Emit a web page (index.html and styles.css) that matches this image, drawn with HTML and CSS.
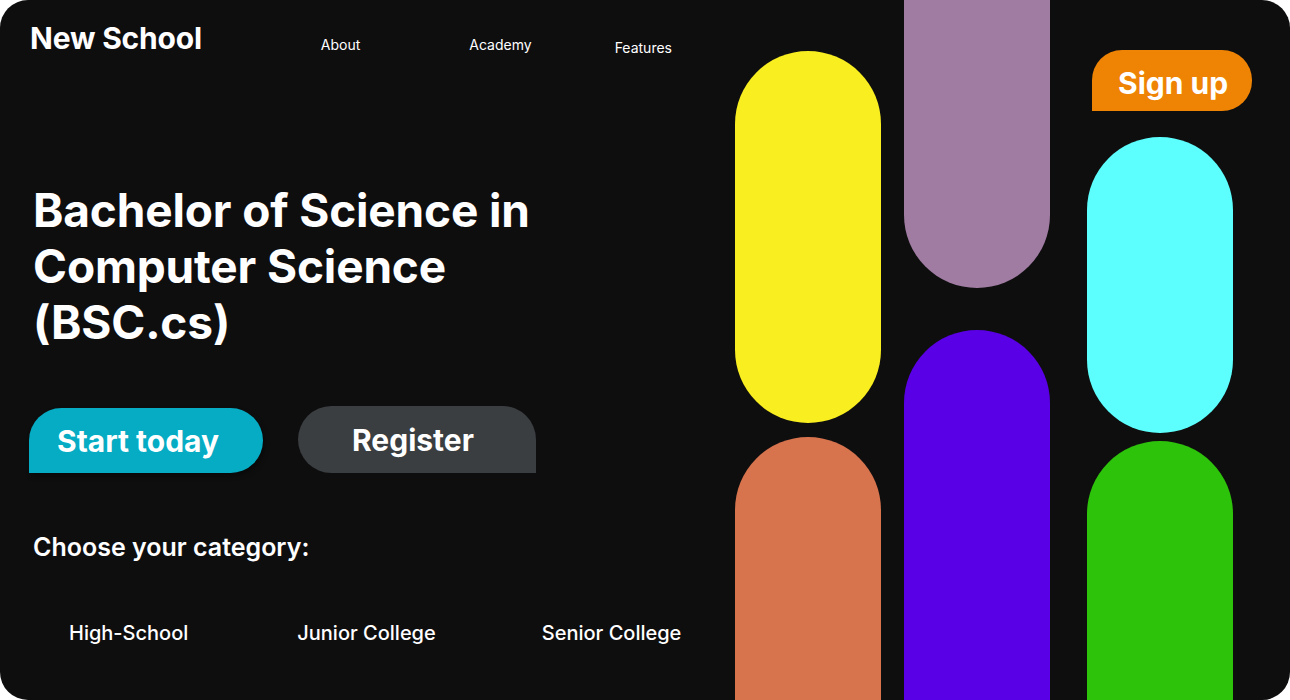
FILE: index.html
```html
<!DOCTYPE html>
<html lang="en">
<head>
<meta charset="utf-8">
<title>New School</title>
<link rel="stylesheet" href="styles.css">
</head>
<body>
<div class="page">
  <main class="left">
    <header class="header">
      <div class="logo">New School</div>
      <nav class="nav">
        <a class="nav-link about">About</a>
        <a class="nav-link academy">Academy</a>
        <a class="nav-link features">Features</a>
      </nav>
    </header>
    <h1 class="title">Bachelor of Science in<br>Computer Science<br>(BSC.cs)</h1>
    <div class="actions">
      <a class="btn btn-start">Start today</a>
      <a class="btn btn-register">Register</a>
    </div>
    <h2 class="choose">Choose your category:</h2>
    <div class="categories">
      <a class="cat cat-high">High-School</a>
      <a class="cat cat-junior">Junior College</a>
      <a class="cat cat-senior">Senior College</a>
    </div>
  </main>
  <aside class="art">
    <div class="col col-1">
      <div class="shape yellow"></div>
      <div class="shape orange"></div>
    </div>
    <div class="col col-2">
      <div class="shape mauve"></div>
      <div class="shape purple"></div>
    </div>
    <div class="col col-3">
      <a class="btn btn-signup">Sign up</a>
      <div class="shape cyan"></div>
      <div class="shape green"></div>
    </div>
  </aside>
</div>
</body>
</html>
```
FILE: styles.css
```css
html, body {
  margin: 0;
  padding: 0;
  background: #ffffff;
}
body {
  font-family: Inter, "Noto Sans", sans-serif;
  color: #ffffff;
}
.page {
  width: 1290px;
  height: 700px;
  background: #0f0e0f;
  border-radius: 28px;
  overflow: hidden;
  display: flex;
}
.left {
  width: 735px;
  flex: none;
  display: flex;
  flex-direction: column;
}
.header {
  display: flex;
  align-items: flex-start;
  padding: 20px 0 0 30px;
}
.logo {
  font-size: 30px;
  font-weight: 700;
  line-height: 36px;
  letter-spacing: -0.2px;
}
.nav {
  display: flex;
  align-items: flex-start;
}
.nav-link {
  font-size: 14px;
  font-weight: 400;
  line-height: 17px;
}
.about { margin: 16px 0 0 119px; }
.academy { margin: 16px 0 0 109px; }
.features { margin: 19px 0 0 83px; }
.title {
  margin: 126px 0 0 33px;
  font-size: 46px;
  font-weight: 700;
  line-height: 56px;
  letter-spacing: -0.15px;
}
.actions {
  display: flex;
  align-items: flex-start;
  gap: 35px;
  margin: 56px 0 0 29px;
}
.btn {
  display: flex;
  align-items: center;
  color: #ffffff;
  font-weight: 700;
  box-sizing: border-box;
}
.btn-start {
  margin-top: 2px;
  width: 234px;
  height: 65px;
  padding-left: 28px;
  background: #05acc4;
  border-radius: 33px 33px 33px 0;
  font-size: 30px;
  box-shadow: 2px 3px 5px rgba(0,0,0,0.35);
}
.btn-register {
  width: 238px;
  height: 67px;
  padding-left: 54px;
  background: #3a3e40;
  border-radius: 34px 34px 0 34px;
  font-size: 30px;
}
.choose {
  margin: 59px 0 0 33px;
  font-size: 25px;
  font-weight: 600;
  line-height: 30px;
}
.categories {
  display: flex;
  margin: 59px 0 0 69px;
}
.cat {
  font-size: 20px;
  font-weight: 500;
  line-height: 24px;
}
.cat-junior { margin-left: 109px; }
.cat-senior { margin-left: 106px; }
.art {
  flex: 1;
  display: flex;
  align-items: stretch;
}
.col {
  display: flex;
  flex-direction: column;
  width: 146px;
}
.col-2 { margin-left: 23px; }
.col-3 { margin-left: 37px; }
.shape { width: 146px; }
.yellow {
  margin-top: 51px;
  height: 372px;
  background: #f9ee1f;
  border-radius: 73px;
}
.orange {
  margin-top: 14px;
  flex: 1;
  background: #d7744e;
  border-radius: 73px 73px 0 0;
}
.mauve {
  height: 288px;
  background: #a07ca3;
  border-radius: 0 0 73px 73px;
}
.purple {
  margin-top: 42px;
  flex: 1;
  background: #5a00e6;
  border-radius: 73px 73px 0 0;
}
.btn-signup {
  margin: 50px 0 0 5px;
  width: 160px;
  height: 61px;
  padding: 4px 0 0 26px;
  background: #ee8304;
  border-radius: 30px 30px 30px 0;
  font-size: 30px;
  font-weight: 700;
}
.cyan {
  margin-top: 26px;
  height: 296px;
  background: #5cfffd;
  border-radius: 73px;
}
.green {
  margin-top: 8px;
  flex: 1;
  background: #2dc30a;
  border-radius: 73px 73px 0 0;
}
```
